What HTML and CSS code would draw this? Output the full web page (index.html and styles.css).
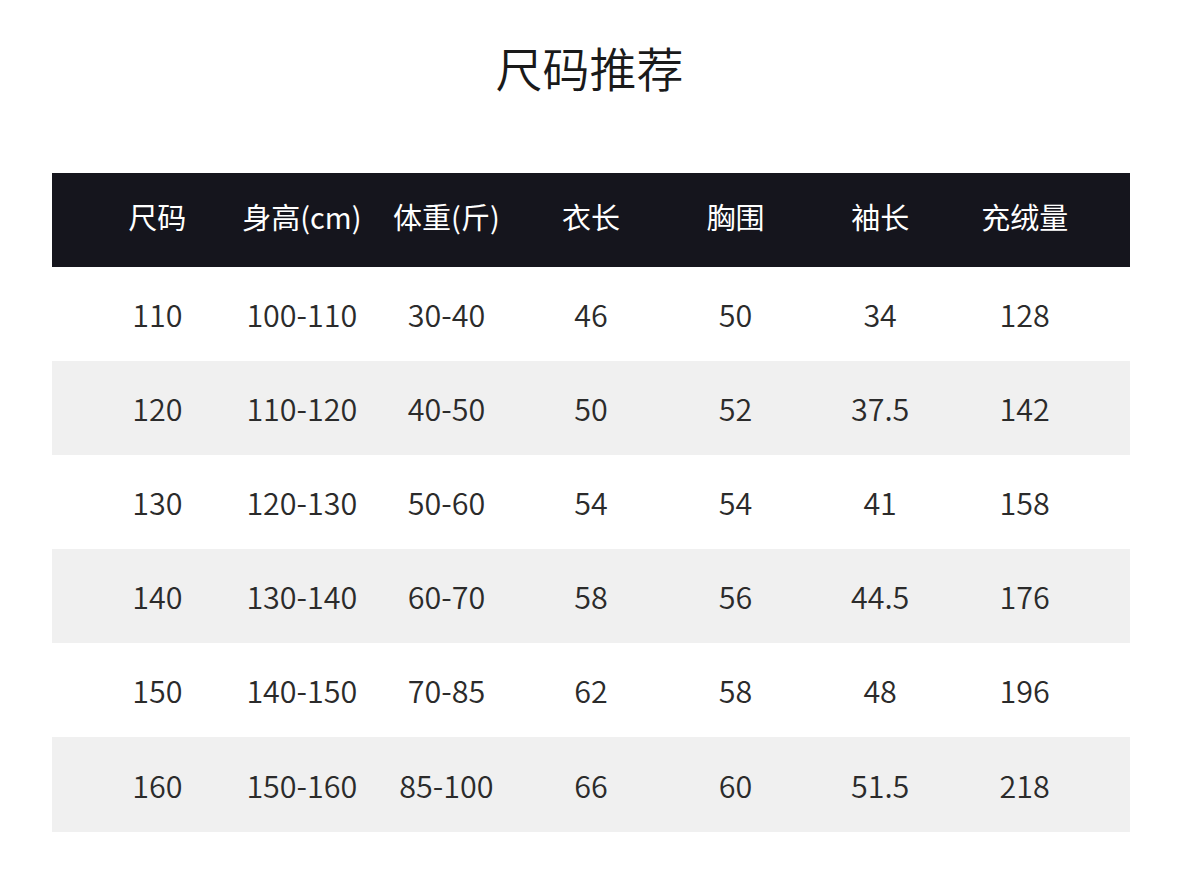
FILE: index.html
```html
<!DOCTYPE html>
<html lang="zh-CN">
<head>
<meta charset="utf-8">
<title>尺码推荐</title>
<link rel="stylesheet" href="styles.css">
</head>
<body>
<div class="page">
  <h1 class="title">尺码推荐</h1>
  <div class="table">
    <div class="row head">
      <div class="cell">尺码</div><div class="cell">身高(cm)</div><div class="cell">体重(斤)</div><div class="cell">衣长</div><div class="cell">胸围</div><div class="cell">袖长</div><div class="cell">充绒量</div>
    </div>
    <div class="row">
      <div class="cell">110</div><div class="cell">100-110</div><div class="cell">30-40</div><div class="cell">46</div><div class="cell">50</div><div class="cell">34</div><div class="cell">128</div>
    </div>
    <div class="row alt">
      <div class="cell">120</div><div class="cell">110-120</div><div class="cell">40-50</div><div class="cell">50</div><div class="cell">52</div><div class="cell">37.5</div><div class="cell">142</div>
    </div>
    <div class="row">
      <div class="cell">130</div><div class="cell">120-130</div><div class="cell">50-60</div><div class="cell">54</div><div class="cell">54</div><div class="cell">41</div><div class="cell">158</div>
    </div>
    <div class="row alt">
      <div class="cell">140</div><div class="cell">130-140</div><div class="cell">60-70</div><div class="cell">58</div><div class="cell">56</div><div class="cell">44.5</div><div class="cell">176</div>
    </div>
    <div class="row">
      <div class="cell">150</div><div class="cell">140-150</div><div class="cell">70-85</div><div class="cell">62</div><div class="cell">58</div><div class="cell">48</div><div class="cell">196</div>
    </div>
    <div class="row alt">
      <div class="cell">160</div><div class="cell">150-160</div><div class="cell">85-100</div><div class="cell">66</div><div class="cell">60</div><div class="cell">51.5</div><div class="cell">218</div>
    </div>
  </div>
</div>
</body>
</html>
```
FILE: styles.css
```css
html, body {
  margin: 0;
  padding: 0;
  background: #ffffff;
}
body {
  font-family: "Noto Sans CJK SC", "Noto Sans", sans-serif;
  color: #2b2b2b;
}
.page {
  width: 1179px;
  height: 882px;
  padding-top: 34px;
  box-sizing: border-box;
}
.title {
  margin: 0;
  height: 66px;
  line-height: 66px;
  text-align: center;
  font-size: 47px;
  font-weight: 350;
  color: #1a1a1a;
}
.table {
  margin: 73px 0 0 52px;
  width: 1078px;
}
.row {
  display: grid;
  grid-template-columns: repeat(7, 1fr);
  padding: 0 33px;
  height: 94px;
  align-items: center;
  font-size: 30.5px;
  font-weight: 350;
}
.row.head {
  background: #15151d;
  color: #ffffff;
  font-size: 29px;
  font-weight: 400;
  padding-bottom: 8px;
  box-sizing: border-box;
}
.row.alt {
  background: #f0f0f0;
}
.row:last-child {
  height: 95px;
}
.cell {
  text-align: center;
  white-space: nowrap;
}
```
